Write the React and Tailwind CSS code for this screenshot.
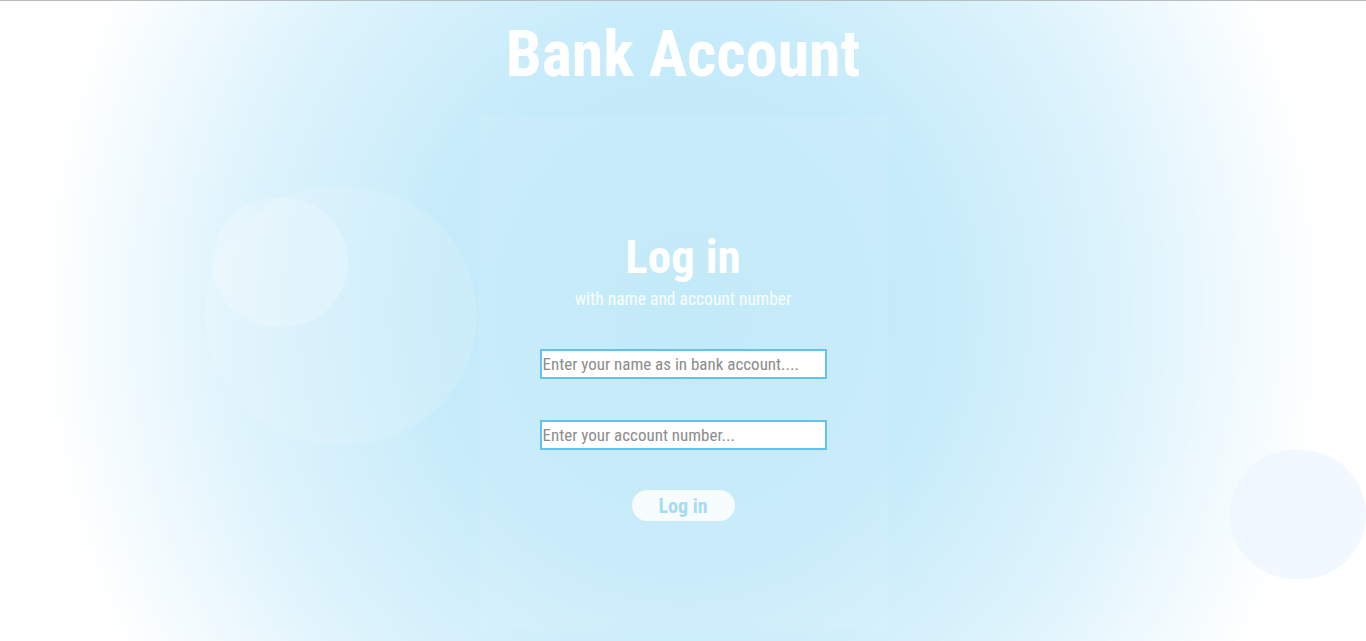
import { useState } from "react";

const FONT = { fontFamily: '"Roboto Condensed", Lato, "Open Sans", sans-serif' };

const Bubble = ({ className }) => (
  <div className={`pointer-events-none absolute rounded-full ${className}`} />
);

const App = () => {
  const [name, setName] = useState("");
  const [account, setAccount] = useState("");

  const handleSubmit = event => {
    event.preventDefault();
  };

  return (
    <div
      className="relative flex h-[641px] flex-col items-center overflow-hidden border-t border-[#b6bec2] bg-[radial-gradient(ellipse_700px_760px_at_50%_48%,#bfe8f9_0%,#c6ebfa_35%,#dcf3fc_62%,#ffffff_92%)]"
      style={FONT}
    >
      <Bubble className="left-[205px] top-[186px] h-[257px] w-[272px] bg-white/[0.12]" />
      <Bubble className="left-[212px] top-[197px] h-[129px] w-[136px] bg-white/[0.22]" />
      <Bubble className="left-[1230px] top-[449px] h-[129px] w-[136px] bg-[#edf6ff]/80" />

      <h1 className="relative mt-[14px] text-[64px] font-bold leading-[80px] text-white">
        Bank Account
      </h1>

      <form
        onSubmit={handleSubmit}
        className="relative mt-[21px] flex h-[514px] w-[409px] flex-col items-center bg-white/[0.07] pt-[113px]"
      >
        <h2 className="text-[47px] font-bold leading-[56px] text-white">Log in</h2>
        <p className="mt-[4px] text-[17.5px] leading-[20px] text-white/90">
          with name and account number
        </p>

        <div className="mt-[40px] flex flex-col gap-[41px]">
          <input
            value={name}
            onChange={e => setName(e.target.value)}
            placeholder="Enter your name as in bank account...."
            className="h-[30px] w-[287px] border-2 border-[#62c3ee] bg-white px-[1px] text-[17px] text-[#555] outline-none placeholder:text-[#8c8c8c]"
          />
          <input
            value={account}
            onChange={e => setAccount(e.target.value)}
            placeholder="Enter your account number..."
            className="h-[30px] w-[287px] border-2 border-[#62c3ee] bg-white px-[1px] text-[17px] text-[#555] outline-none placeholder:text-[#8c8c8c]"
          />
        </div>

        <button
          type="submit"
          className="mt-[40px] h-[31px] w-[103px] rounded-full bg-white/85 text-[20px] font-bold text-[#a6dcf3]"
        >
          Log in
        </button>
      </form>
    </div>
  );
};

export default App;
